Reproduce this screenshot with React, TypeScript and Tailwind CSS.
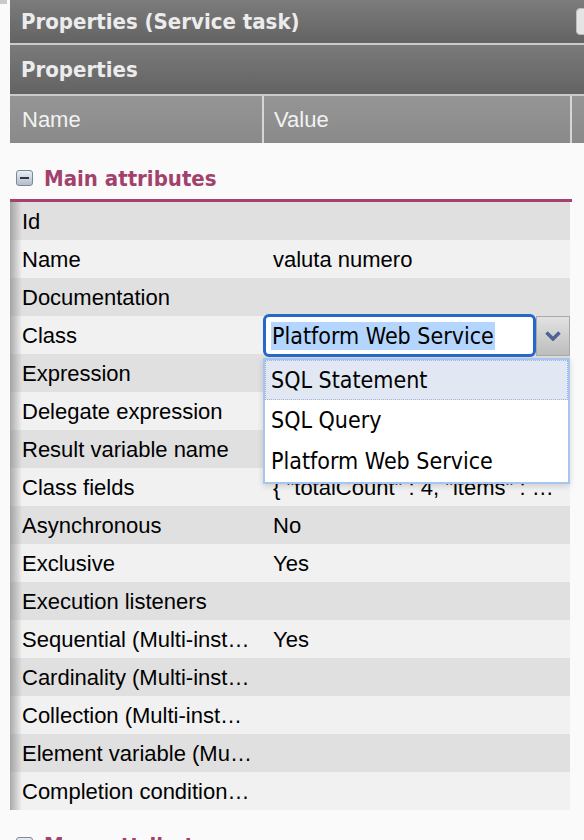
import React from 'react';

const rows: [string, string][] = [
    ['Id', ''],
    ['Name', 'valuta numero'],
    ['Documentation', ''],
    ['Class', ''],
    ['Expression', ''],
    ['Delegate expression', ''],
    ['Result variable name', ''],
    ['Class fields', '{ "totalCount" : 4, "items" : [{ "id" : 1, "name" : "EUR" }]'],
    ['Asynchronous', 'No'],
    ['Exclusive', 'Yes'],
    ['Execution listeners', ''],
    ['Sequential (Multi-instance)', 'Yes'],
    ['Cardinality (Multi-instance)', ''],
    ['Collection (Multi-instance)', ''],
    ['Element variable (Multi-instance)', ''],
    ['Completion condition (Multi-instance)', ''],
];

const boldFont = "font-['DejaVu_Sans_Condensed','DejaVu_Sans',sans-serif] font-bold";

function ClassDropdown() {
    return (
        <div className="absolute left-0 top-[-2px] z-10 font-['DejaVu_Sans_Condensed','DejaVu_Sans',sans-serif] text-[23px] text-black">
            <div className="flex">
                {/* input */}
                <div className="w-[273px] h-[43px] rounded-[6px] border-[3px] border-[#2767c9] bg-white flex items-center pl-[5px]">
                    <span className="bg-[#b4d5fd] leading-[28px] px-[1px] whitespace-nowrap">Platform Web Service</span>
                </div>
                {/* arrow button */}
                <div className="w-[34px] h-[40px] mt-[2px] bg-gradient-to-b from-[#e2e2e2] to-[#bdbdbd] border border-[#a9a9a9] flex items-center justify-center">
                    <svg width="16" height="10" viewBox="0 0 16 10">
                        <path d="M1.5 1.5 L8 8 L14.5 1.5" fill="none" stroke="#4a6494" strokeWidth="3.5" strokeLinejoin="miter" />
                    </svg>
                </div>
            </div>
            {/* options list */}
            <div className="w-[307px] mt-[1px] bg-white border-2 border-[#a6c6f1] shadow-[0_2px_6px_rgba(0,0,0,0.15)]">
                <div className="h-[40px] flex items-center pl-[5px] bg-[#e1e7f3] border border-dotted border-[#9fb1d4]">SQL Statement</div>
                <div className="h-[41px] flex items-center pl-[6px]">SQL Query</div>
                <div className="h-[41px] flex items-center pl-[6px] whitespace-nowrap">Platform Web Service</div>
            </div>
        </div>
    );
}

function SectionTitle({ label, open }: { label: string; open: boolean }) {
    return (
        <div className="shrink-0 flex items-center h-[56px] pt-[14px] pl-[6px] gap-[11px]">
            <div className="relative w-[17px] h-[16px] rounded-[3px] border border-[#7d8795] bg-gradient-to-b from-[#e9eef4] to-[#b2bccb] flex items-center justify-center">
                <div className="w-[9px] h-[2px] bg-[#2c3646]" />
                {!open && <div className="absolute w-[2px] h-[9px] bg-[#2c3646]" />}
            </div>
            <span className={`${boldFont} text-[22px] text-[#a3416d]`}>{label}</span>
        </div>
    );
}

export default function App() {
    return (
        <div className="w-[584px] h-[840px] overflow-hidden bg-[#fafafa] flex items-start font-['Liberation_Sans',Arial,sans-serif]">
            {/* left strip */}
            <div className="w-[10px] shrink-0">
                <div className="w-[7px] h-[4px] bg-[#c9c9c9]" />
            </div>

            <div className="flex-1 flex flex-col min-w-0">
                {/* panel title */}
                <div className="h-[43px] shrink-0 bg-gradient-to-b from-[#7c7c7c] to-[#636363] flex items-center justify-between pl-[11px]">
                    <span className={`${boldFont} text-[22px] text-[#ececec]`}>Properties (Service task)</span>
                    <div className="w-[18px] h-[27px] mr-[-10px] rounded-[4px] bg-[#e4e4e4] border border-[#bdbdbd]" />
                </div>
                <div className="h-[2px] shrink-0 bg-[#cbcbcb]" />

                {/* sub title */}
                <div className="h-[49px] shrink-0 bg-gradient-to-b from-[#7a7a7a] to-[#636363] flex items-center pl-[11px]">
                    <span className={`${boldFont} text-[22px] text-[#ececec]`}>Properties</span>
                </div>
                <div className="h-[2px] shrink-0 bg-[#cbcbcb]" />

                {/* column header */}
                <div className="h-[47px] shrink-0 bg-gradient-to-b from-[#959595] to-[#8a8a8a] flex text-[22px] text-[#f2f2f2]">
                    <div className="w-[252px] flex items-center pl-[12px]">Name</div>
                    <div className="w-[2px] bg-[#d6d6d6]" />
                    <div className="w-[306px] flex items-center pl-[10px]">Value</div>
                    <div className="w-[2px] bg-[#d6d6d6]" />
                </div>

                <SectionTitle label="Main attributes" open />
                <div className="shrink-0 w-[562px] h-[3px] bg-[#a6416f]" />

                <div className="shrink-0 w-[560px] flex flex-col text-[22px] text-black">
                    {rows.map(([name, value], i) => (
                        <div
                            key={name}
                            className={`relative h-[38px] shrink-0 flex items-center ${i % 2 === 0 ? 'bg-[#e0e0e0]' : 'bg-[#f1f1f1]'}`}
                        >
                            <div className="absolute left-0 top-0 bottom-0 w-[12px] bg-gradient-to-r from-[#8a8a8a]/70 to-transparent" />
                            <div className="w-[253px] shrink-0 pl-[12px] pr-[10px] truncate">{name}</div>
                            <div className="relative flex-1 min-w-0 pl-[10px] pr-[12px] truncate">
                                {value}
                            </div>
                            {name === 'Class' && (
                                <div className="absolute left-[253px] top-0">
                                    <ClassDropdown />
                                </div>
                            )}
                        </div>
                    ))}
                </div>

                <SectionTitle label="More attributes" open={false} />
            </div>
        </div>
    );
}
